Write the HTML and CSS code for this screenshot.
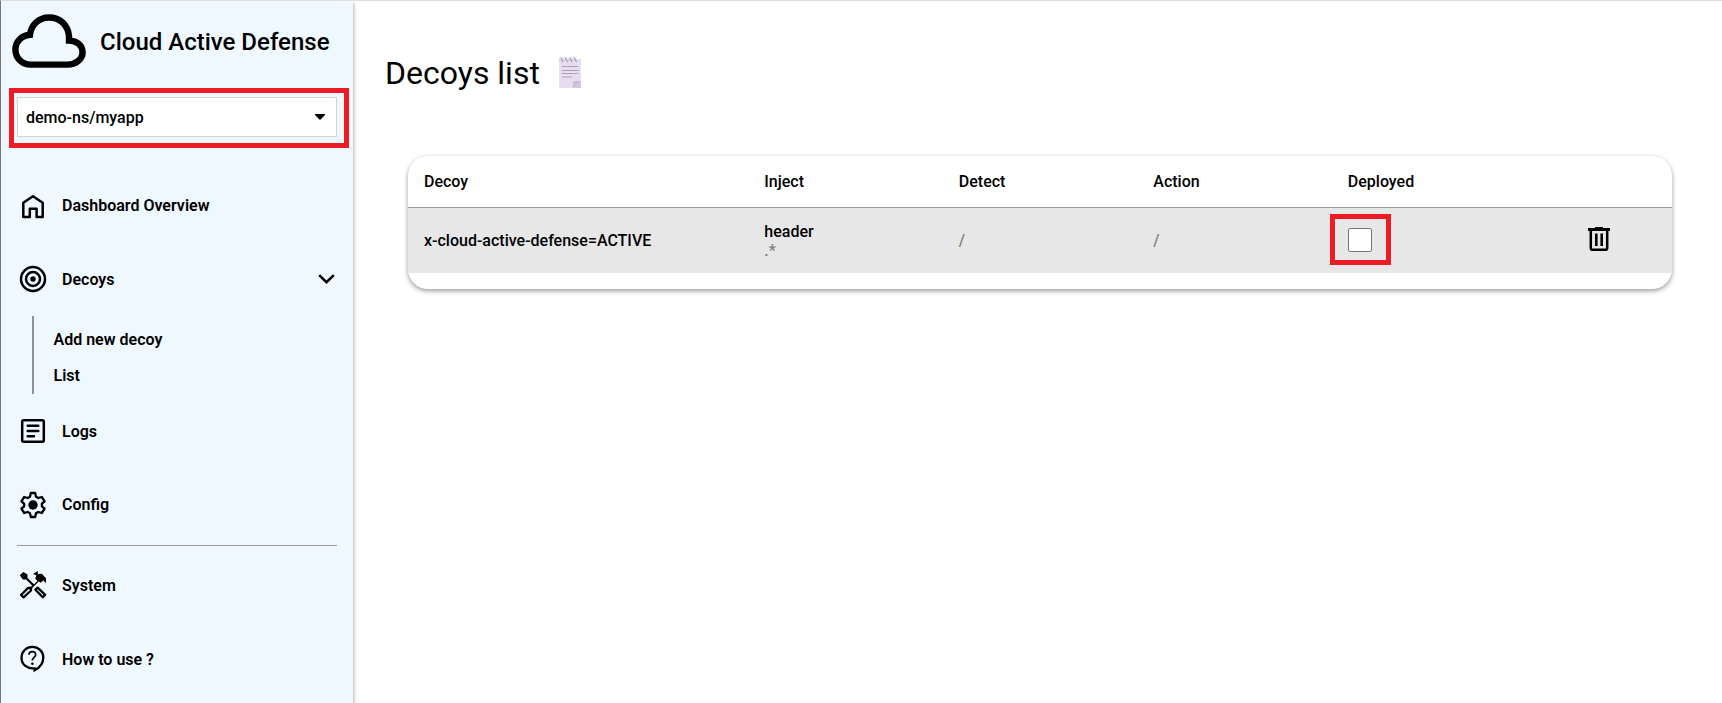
FILE: index.html
```html
<!DOCTYPE html>
<html lang="en">
<head>
<meta charset="utf-8">
<title>Cloud Active Defense</title>
<link rel="stylesheet" href="styles.css">
</head>
<body>
<div class="app">
  <aside class="sidebar">
    <div class="brand">
      <svg class="brand-logo" viewBox="0 0 74 54" fill="none" stroke="#000" stroke-width="6.4"><path d="M18.500 50.600H55.500C64 50.600 70.600 45 70.600 38.500C70.600 31.500 65 26.600 57 26.600V22C56 11 48 3.500 37 3.500C27 3.500 19 11 18 20.800C9.500 21.500 3.400 27.500 3.400 35.500C3.400 44 10 50.600 18.500 50.600Z"/></svg>
      <span class="brand-name">Cloud Active Defense</span>
    </div>
    <div class="app-picker">
      <div class="select"><span>demo-ns/myapp</span><svg width="10" height="6" viewBox="0 0 10 6"><path d="M0 0H10V1L5 6L0 1Z"/></svg></div>
    </div>
    <nav class="nav">
      <a class="nav-item">
        <svg class="icon" viewBox="0 0 28 28" fill="none" stroke="#000" stroke-width="2.500" stroke-linejoin="round"><path d="M4.300 11.800L14 5.300L23.700 11.800V26H17.600V17.800H10.800V26H4.300Z"/></svg>
        <span>Dashboard Overview</span>
      </a>
      <a class="nav-item">
        <svg class="icon" viewBox="0 0 28 28" fill="none" stroke="#000" stroke-width="2.500"><circle cx="14" cy="14" r="12"/><circle cx="14" cy="14" r="7"/><circle cx="14" cy="14" r="2.700" fill="#000" stroke="none"/></svg>
        <span>Decoys</span>
        <svg class="chevron" width="17" height="10" viewBox="0 0 17 10" fill="none" stroke="#000" stroke-width="2.500"><path d="M1.200 1.200L8.500 8.200L15.800 1.200"/></svg>
      </a>
      <div class="subnav"><a>Add new decoy</a><a>List</a></div>
      <a class="nav-item">
        <svg class="icon" viewBox="0 0 28 28" fill="none" stroke="#000" stroke-width="2.500"><rect x="3.200" y="3.200" width="21.600" height="21.600" rx="1.500"/><path stroke-linecap="round" d="M8.700 8.800H19.300M8.700 14H19.300M8.700 19.200H15"/></svg>
        <span>Logs</span>
      </a>
      <a class="nav-item config">
        <svg class="icon" viewBox="0 0 28 28" fill="none" stroke="#000" stroke-width="2.300" stroke-linejoin="round"><path d="M11.800 2H16.200L17 5.700L19.300 7L22.800 6L25.600 10.300L22.900 12.600V15.400L25.600 17.700L22.800 22L19.300 21L17 22.300L16.200 26H11.800L11 22.300L8.700 21L5.200 22L2.400 17.700L5.100 15.400V12.600L2.400 10.300L5.200 6L8.700 7L11 5.700Z"/><circle cx="14" cy="14" r="4.700" fill="#000" stroke="none"/></svg>
        <span>Config</span>
      </a>
      <hr class="divider">
      <a class="nav-item">
        <svg class="icon" viewBox="0 0 28 28"><path d="M.8 4.200L4.300 1L8.500 3.600V7L15 13.300L18.500 9.900L16.300 7.700L17.300 4.300L14 3L18.800 0V3L22.800 2.800L27 7.300V12L24.200 9.600L21.800 11.700L19.700 10.500L11.500 18.700L9.400 17.500L13.300 14.800L7.200 8.500H3.800Z"/><path d="M2 24L9.200 16.900L12 17V19.500L4.600 26.300Z M16.400 18.700L18.600 16.700L26.200 23.800L23.800 26.200Z" fill="none" stroke="#000" stroke-width="2.300" stroke-linejoin="round"/></svg>
        <span>System</span>
      </a>
      <a class="nav-item">
        <svg class="icon" viewBox="0 0 28 28" fill="none" stroke="#000" stroke-width="2.300"><path d="M14.500 23.300C8 23.800 2.500 19.500 2.500 12.700C2.500 6.500 7.200 1.900 13.300 1.900S24.300 6.500 24.300 12.500C24.300 18.500 20.500 22.800 15.600 25.300V23.300Z"/><path stroke-width="1.700" d="M10 9.800C10 7.800 11.500 6.700 13.400 6.700S16.700 8 16.700 9.700C16.700 12 13.400 12.500 13.400 15.600"/><circle cx="13.400" cy="18.700" r="1.300" fill="#000" stroke="none"/></svg>
        <span>How to use ?</span>
      </a>
    </nav>
  </aside>
  <main class="main">
    <h1 class="title">Decoys list
      <svg class="notepad" viewBox="0 0 22 31"><path d="M0 2H22V31H0Z" fill="#e6def0"/><path d="M14 31L22 24V31Z" fill="#d5c9e2"/><path d="M14 31L22 24H15.500L14 25Z" fill="#c8bdd4"/><path d="M3 9.500H19M3 13.500H20M3 16.500H19M3 20H13" stroke="#aaa2b3" stroke-width="1"/><path d="M2 1L4 5M6.500 1L8.500 5M11 1L13 5M15.500 1L17.500 5" stroke="#9d98a5" stroke-width="1.100"/><path d="M1 4A1.800 2 0 0 1 4 1M5.500 4A1.800 2 0 0 1 8.500 1M10 4A1.800 2 0 0 1 13 1M14.500 4A1.800 2 0 0 1 17.500 1" stroke="#c9c4ce" fill="none"/></svg>
    </h1>
    <section class="card">
      <div class="row head"><div>Decoy</div><div>Inject</div><div>Detect</div><div>Action</div><div>Deployed</div><div></div></div>
      <div class="row body">
        <div>x-cloud-active-defense=ACTIVE</div>
        <div class="stack"><span>header</span><span class="muted">.*</span></div>
        <div class="muted">/</div>
        <div class="muted">/</div>
        <div class="deploy"><span class="checkbox"></span></div>
        <div class="delete"><svg width="22" height="24" viewBox="0 0 22 24"><path d="M7 0H15V1H22V4H0V1H7Z"/><path d="M2.800 3V21.200Q2.800 22.800 4.400 22.800H17.600Q19.200 22.800 19.200 21.200V3" fill="none" stroke="#000" stroke-width="2.500"/><path d="M8.300 6.500V19M13.700 6.500V19" stroke="#000" stroke-width="2.600"/></svg></div>
      </div>
    </section>
  </main>
</div>
</body>
</html>
```
FILE: styles.css
```css
* { box-sizing: border-box; }
body { margin: 0; background: #fff; color: #000; font: 500 16px/20px Roboto, sans-serif; }
.app { display: flex; height: 703px; overflow: hidden; border-top: 1px solid #dedede; border-left: 1px solid #77777a; }
.sidebar { flex: none; width: 352px; padding: 0 16px; background: #f0f8ff; box-shadow: 1px 2px 3px rgba(0, 0, 0, .3); }
.brand { display: flex; align-items: center; gap: 14px; height: 87px; margin-left: -5px; padding-bottom: 8px; }
.brand-logo { flex: none; width: 74px; height: 54px; }
.brand-name { font-size: 24px; line-height: 28px; white-space: nowrap; padding-top: 2px; }
.app-picker { width: 340px; height: 60px; margin-left: -8px; padding: 4px 3px; border: 5px solid #ed1c24; }
.select { display: flex; align-items: center; justify-content: space-between; width: 320px; height: 40px; padding: 0 11px 0 8px; background: #fff; border: 1px solid #d3d3d3; }
.select span { padding-top: 2px; }
.nav { padding-top: 20px; font-weight: 600; }
.nav-item { display: flex; align-items: center; height: 74px; gap: 15px; padding-left: 2px; }
.nav-item span { padding-top: 2px; }
.nav-item.config span { padding-top: 0; }
.icon { flex: none; width: 28px; height: 28px; }
.chevron { margin: -1px 2px 0 auto; }
.subnav { display: flex; flex-direction: column; gap: 16px; height: 78px; margin-left: 15px; padding: 14px 0 0 19.5px; border-left: 2px solid #909095; }
.divider { height: 1px; margin: 3px 0 2px; border: 0; background: #999; }
.main { flex: 1; padding: 50px 50px 0 32px; }
.title { display: flex; align-items: center; gap: 19px; height: 44px; margin: 0; font-size: 32px; font-weight: 400; }
.notepad { width: 22px; height: 31px; margin-top: -1px; }
.card { margin: 61px 0 0 23px; padding-bottom: 16px; border-radius: 20px; background: #fff; box-shadow: 0 2px 5px rgba(0, 0, 0, .4); overflow: hidden; }
.row { display: grid; grid-template-columns: 340.3px repeat(4, 194.5px) 1fr; align-items: center; }
.row > div { padding-left: 16px; }
.head { height: 52px; border-bottom: 1px solid #999; }
.body { height: 65px; background: #e7e7e7; }
.stack { display: flex; flex-direction: column; line-height: 19px; }
.muted { color: #808080; }
.row > .deploy { margin: -2px 0 0 -2px; padding: 0; }
.deploy { display: flex; align-items: center; justify-content: center; width: 61px; height: 51px; border: 5px solid #ed1c24; }
.checkbox { width: 24px; height: 24px; border: 1px solid #767676; border-radius: 2px; background: #fff; }
.row > .delete { display: flex; justify-content: center; margin-top: -3px; padding: 0; }
```
